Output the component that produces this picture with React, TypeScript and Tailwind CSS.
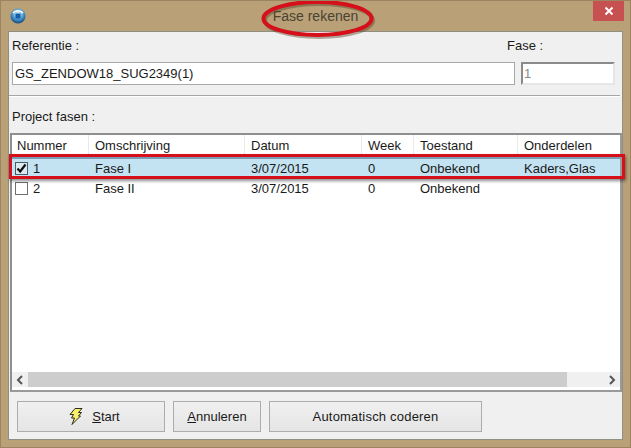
const columns = [
  { label: "Nummer", width: "w-[77px] pl-[5px]" },
  { label: "Omschrijving", width: "w-[156px] pl-[6px]" },
  { label: "Datum", width: "w-[117px] pl-[6px]" },
  { label: "Week", width: "w-[52px] pl-[6px]" },
  { label: "Toestand", width: "w-[104px] pl-[6px]" },
  { label: "Onderdelen", width: "flex-1 pl-[6px]" },
];

const rows = [
  { nr: "1", name: "Fase I", date: "3/07/2015", week: "0", state: "Onbekend", parts: "Kaders,Glas", checked: true },
  { nr: "2", name: "Fase II", date: "3/07/2015", week: "0", state: "Onbekend", parts: "", checked: false },
];

function AppIcon() {
  return (
    <svg width="16" height="16" viewBox="0 0 16 16">
      <defs>
        <radialGradient id="orb" cx="50%" cy="35%" r="65%">
          <stop offset="0%" stopColor="#e8f4fb" />
          <stop offset="55%" stopColor="#4d9bd0" />
          <stop offset="100%" stopColor="#12487c" />
        </radialGradient>
      </defs>
      <circle cx="8" cy="8" r="7.5" fill="url(#orb)" />
      <rect x="5.5" y="5.5" width="5" height="5" rx="1" fill="#0f5fa8" />
      <path d="M3 5 C5 2 11 2 13 5" stroke="#ffffff" strokeWidth="1.4" fill="none" />
    </svg>
  );
}

function Bolt() {
  return (
    <svg width="14" height="17" viewBox="0 0 14 17">
      <path d="M6 .5 L13 .5 L9.5 4.5 L12.5 4.5 L9.5 8 L11.5 8 L3 16.5 L5.5 10 L2.5 10 L4.5 6.5 L1 6.5 Z" fill="#f7ee6a" stroke="#2b2b1e" strokeWidth="1" strokeLinejoin="round" />
    </svg>
  );
}

function Checkbox({ checked }: { checked: boolean }) {
  return (
    <span className={`w-[13px] h-[13px] border flex items-center justify-center ${checked ? "border-[#4a5a66] bg-[#dbe9f1]" : "border-[#707070] bg-white"}`}>
      {checked && (
        <svg width="11" height="11" viewBox="0 0 11 11">
          <path d="M1.5 5.5 L4.2 8.5 L9.5 1.5" stroke="#111111" strokeWidth="2.2" fill="none" />
        </svg>
      )}
    </span>
  );
}

function Button({ className, children }: { className: string; children: React.ReactNode }) {
  return (
    <button className={`h-[31px] border border-[#acacac] bg-gradient-to-b from-[#f0f0f0] to-[#e5e5e5] flex items-center justify-center text-[#1a1a1a] ${className}`}>
      {children}
    </button>
  );
}

export default function App() {
  return (
    <div className="relative w-[631px] h-[448px] bg-[#b9a077] border border-[#9a8560] flex flex-col overflow-hidden font-['Liberation_Sans',sans-serif] text-[13px] text-[#1a1a1a]">
      {/* Title bar */}
      <div className="relative h-[30px] flex items-center justify-center shrink-0">
        <span className="absolute left-[9px] top-[7px]">
          <AppIcon />
        </span>
        <span className="text-[14px] text-[#4a4334]">Fase rekenen</span>
        <div className="absolute right-[6px] top-0 w-[31px] h-[20px] bg-[#c75050] flex items-center justify-center">
          <svg width="10" height="10" viewBox="0 0 10 10">
            <path d="M1.5 1.5 L8.5 8.5 M8.5 1.5 L1.5 8.5" stroke="#ffffff" strokeWidth="2" />
          </svg>
        </div>
      </div>

      {/* Panel */}
      <div className="mx-[7px] w-[615px] h-[409px] bg-[#f0f0f0] border border-[#8f8f85] flex flex-col">
        <div className="flex px-[3px] gap-[6px] mt-[3px]">
          <div className="w-[503px] flex flex-col">
            <span className="h-[22px] mb-[5px] flex items-center">Referentie :</span>
            <div className="h-[23px] border border-[#a9a9a9] bg-white flex items-center pl-[2px]">GS_ZENDOW18_SUG2349(1)</div>
          </div>
          <div className="w-[94px] flex flex-col">
            <span className="h-[22px] mb-[5px] -ml-[14px] flex items-center">Fase :</span>
            <div className="h-[23px] pl-[1px] border-2 border-t-[#8a8a8a] border-l-[#8a8a8a] border-r-[#e6e6e6] border-b-[#e6e6e6] bg-white flex items-center text-[#8a8a8a]">1</div>
          </div>
        </div>

        <div className="h-[2px] mt-[10px] mr-[2px] bg-[#a5a5a5] border-b border-white" />

        <div className="h-[21px] mt-[9px] pl-[3px] flex items-center">Project fasen :</div>

        {/* List */}
        <div className="ml-[1px] mt-[6px] w-[612px] h-[259px] border-2 border-t-[#8f8f8f] border-l-[#8f8f8f] border-r-[#9a9a9a] border-b-[#9a9a9a] bg-white flex flex-col">
          <div className="h-[22px] flex shrink-0">
            {columns.map((c) => (
              <div key={c.label} className={`${c.width} flex items-center border-r border-[#e9e9e9] last:border-r-0`}>
                {c.label}
              </div>
            ))}
          </div>
          {rows.map((r) => (
            <div key={r.nr} className={`h-[21px] flex items-center ${r.checked ? "bg-[#c4e3f2] border-t-2 border-[#7a9db5]" : ""}`}>
              <div className="w-[77px] flex items-center gap-[5px] pl-[3px]">
                <Checkbox checked={r.checked} />
                {r.nr}
              </div>
              <div className="w-[156px] pl-[6px]">{r.name}</div>
              <div className="w-[117px] pl-[6px]">{r.date}</div>
              <div className="w-[52px] pl-[6px]">{r.week}</div>
              <div className="w-[104px] pl-[6px]">{r.state}</div>
              <div className="flex-1 pl-[6px]">{r.parts}</div>
            </div>
          ))}
          {/* Scrollbar */}
          <div className="mt-auto mb-[3px] h-[15px] bg-[#f0f0f0] flex items-center">
            <span className="w-[16px] flex justify-center">
              <svg width="8" height="10" viewBox="0 0 8 10">
                <path d="M6 1 L2 5 L6 9" stroke="#555555" strokeWidth="2" fill="none" />
              </svg>
            </span>
            <div className="w-[539px] h-full bg-[#cdcdcd]" />
            <span className="ml-auto w-[16px] flex justify-center">
              <svg width="8" height="10" viewBox="0 0 8 10">
                <path d="M2 1 L6 5 L2 9" stroke="#555555" strokeWidth="2" fill="none" />
              </svg>
            </span>
          </div>
        </div>

        {/* Buttons */}
        <div className="flex gap-[8px] pl-[8px] mt-[9px]">
          <Button className="w-[148px] gap-[9px] pl-[7px]">
            <Bolt />
            <span>
              <span className="underline">S</span>tart
            </span>
          </Button>
          <Button className="w-[88px]">
            <span>
              <span className="underline">A</span>nnuleren
            </span>
          </Button>
          <Button className="w-[213px] tracking-[0.2px]">Automatisch coderen</Button>
        </div>
      </div>

      {/* Red annotations */}
      <svg className="absolute left-[258px] top-0" width="120" height="40" viewBox="0 0 120 40">
        <ellipse cx="60" cy="19.5" rx="54" ry="16.5" fill="none" stroke="#5a4a30" strokeOpacity="0.45" strokeWidth="4" />
        <ellipse cx="58.5" cy="17.5" rx="54" ry="16.5" fill="none" stroke="#d5101a" strokeWidth="4" />
      </svg>
      <div className="absolute left-[8px] top-[153px] w-[616px] h-[25px] border-[3px] border-[#d5101a] shadow-[1px_2px_3px_rgba(0,0,0,0.45)]" />
    </div>
  );
}
